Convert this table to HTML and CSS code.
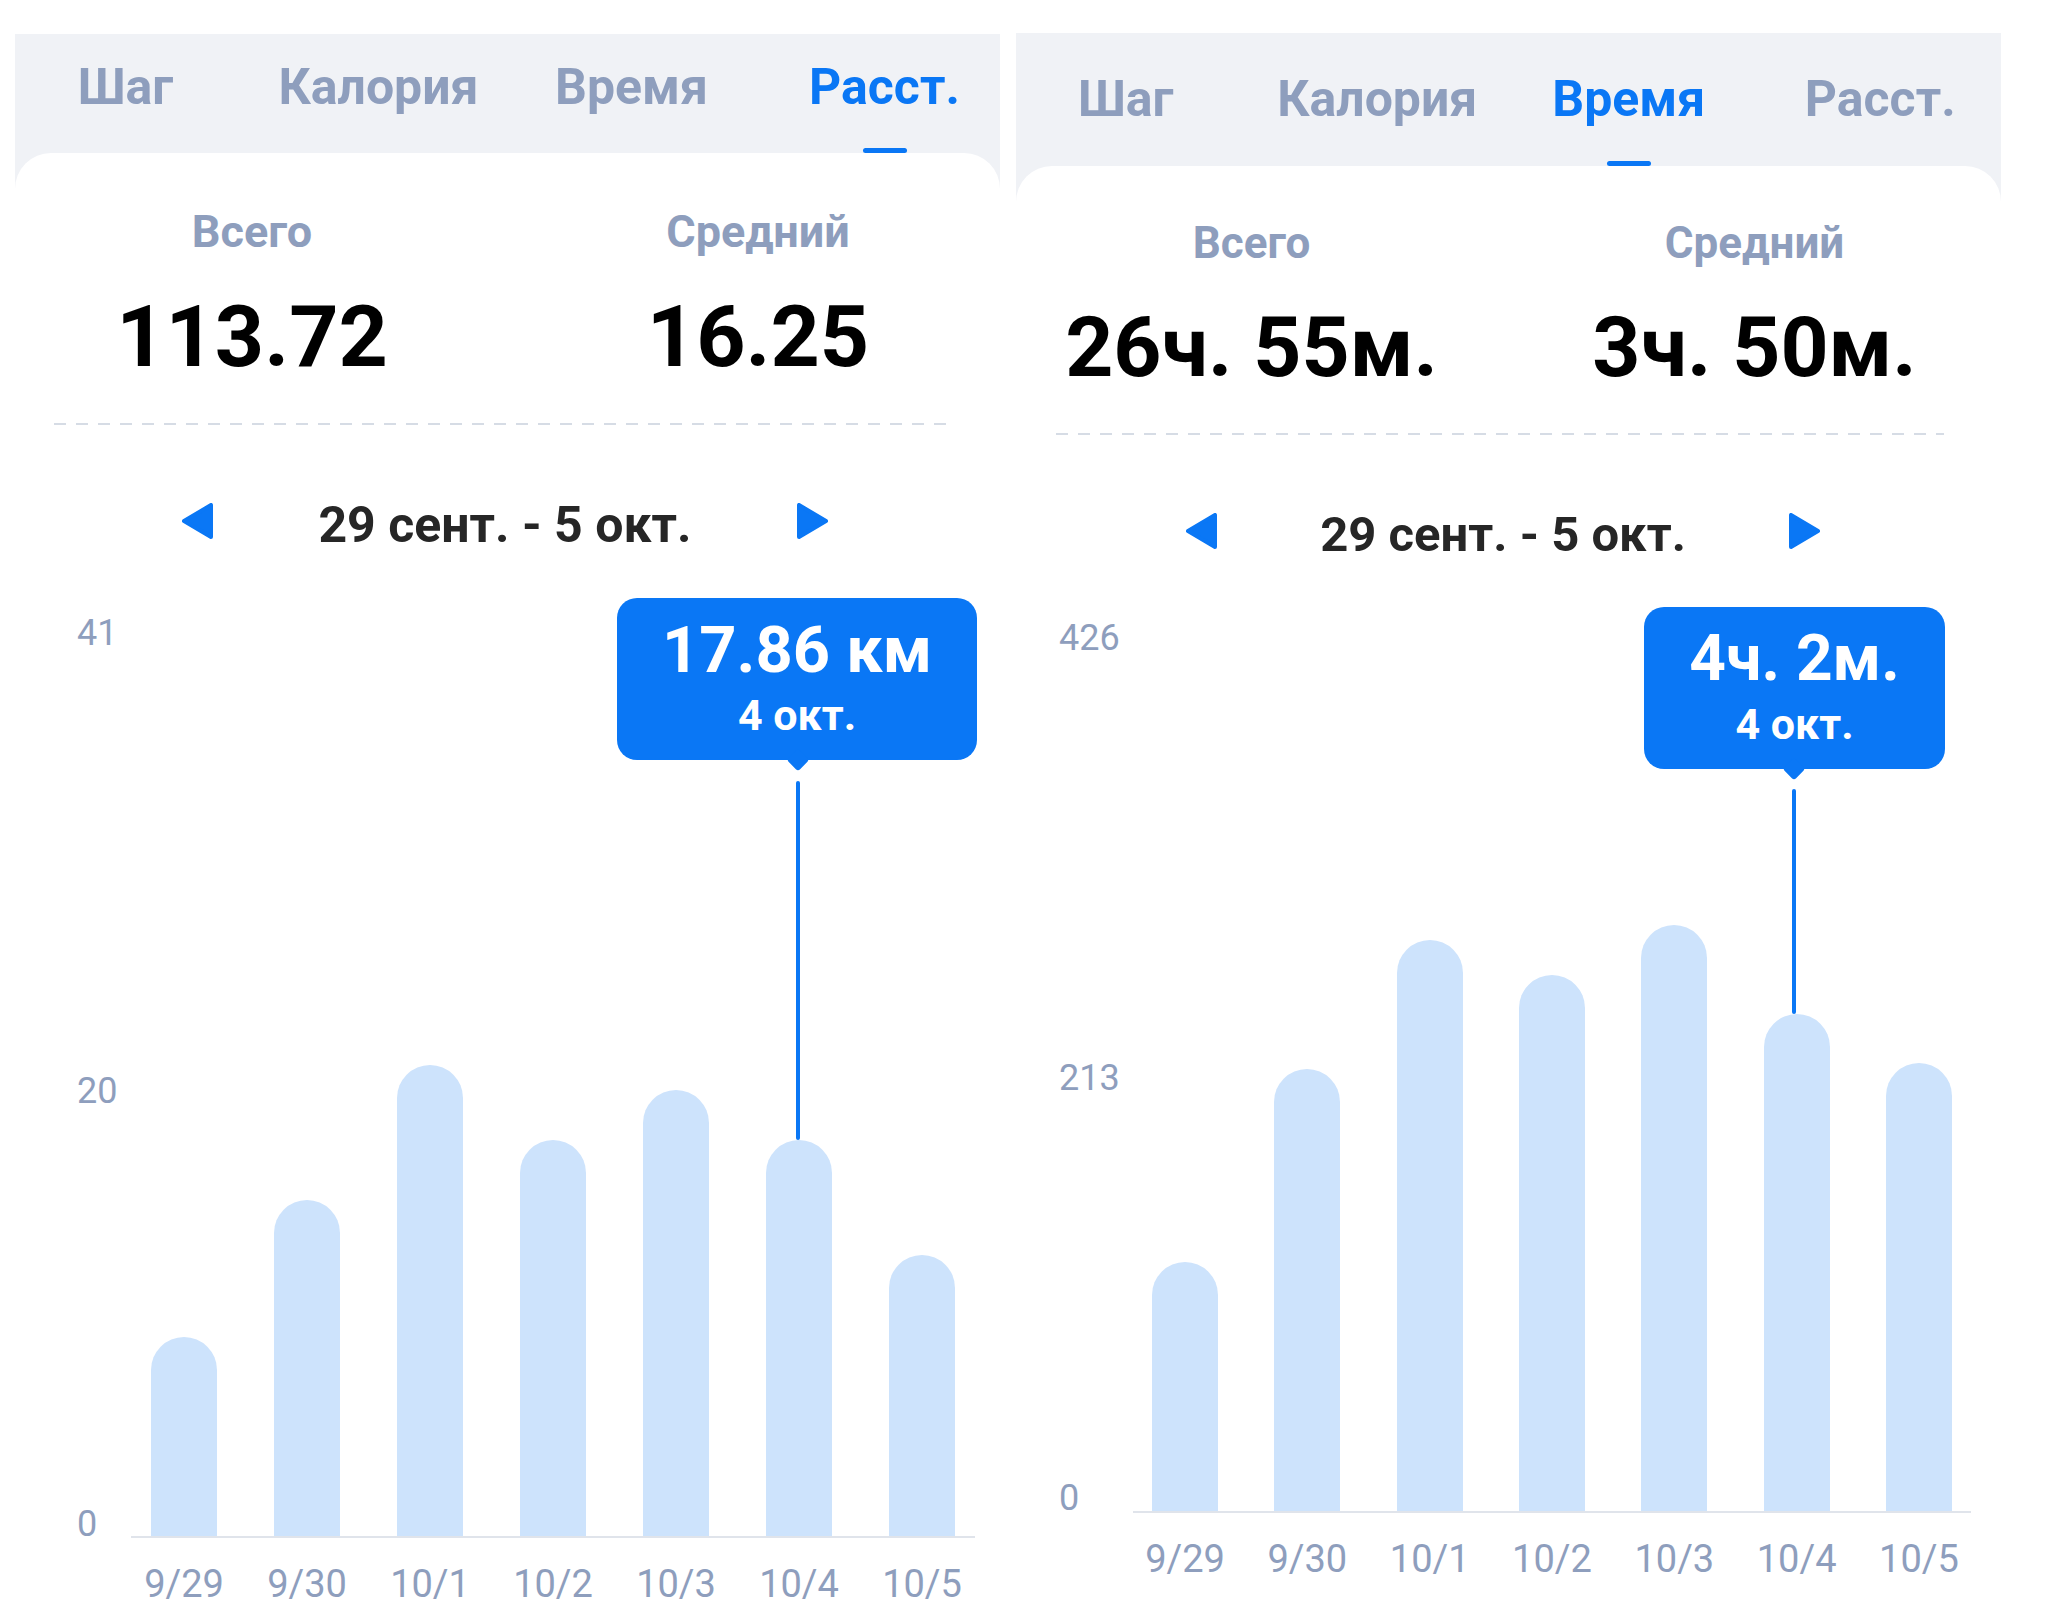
FILE: index.html
```html
<!DOCTYPE html>
<html lang="ru">
<head>
<meta charset="utf-8">
<title>Статистика</title>
<link rel="stylesheet" href="styles.css">
</head>
<body>
<div class="page">

  <section class="panel">
    <div class="tabs">
      <div class="tab"><span class="tab-label">Шаг</span></div>
      <div class="tab"><span class="tab-label">Калория</span></div>
      <div class="tab"><span class="tab-label">Время</span></div>
      <div class="tab tab--active"><span class="tab-label">Расст.</span><span class="tab-underline"></span></div>
    </div>
    <div class="card">
      <div class="card-body">
        <div class="stats">
          <div class="stat"><div class="stat-label">Всего</div><div class="stat-value">113.72</div></div>
          <div class="stat"><div class="stat-label">Средний</div><div class="stat-value">16.25</div></div>
        </div>
        <div class="divider"></div>
        <div class="nav">
          <svg class="arrow" viewBox="0 0 31 36" width="31" height="36"><polygon points="29,2 29,34 2,18"/></svg>
          <span class="nav-range">29 сент. - 5 окт.</span>
          <svg class="arrow" viewBox="0 0 31 36" width="31" height="36"><polygon points="2,2 2,34 29,18"/></svg>
        </div>
        <div class="chart">
          <div class="yaxis">
            <span class="ytick" style="margin-top:58px">41</span>
            <span class="ytick" style="margin-top:418px">20</span>
            <span class="ytick" style="margin-top:393px">0</span>
          </div>
          <div class="plot">
            <div class="bars">
              <div class="bar" style="height:199px"></div>
              <div class="bar" style="height:336px"></div>
              <div class="bar" style="height:471px"></div>
              <div class="bar" style="height:396px"></div>
              <div class="bar" style="height:446px"></div>
              <div class="bar" style="height:396px"></div>
              <div class="bar" style="height:281px"></div>
            </div>
            <div class="xlabels">
              <span class="xlabel">9/29</span><span class="xlabel">9/30</span><span class="xlabel">10/1</span><span class="xlabel">10/2</span><span class="xlabel">10/3</span><span class="xlabel">10/4</span><span class="xlabel">10/5</span>
            </div>
          </div>
          <div class="tooltip tooltip--a">
            <div class="tooltip-value">17.86 км</div>
            <div class="tooltip-date">4 окт.</div>
          </div>
          <div class="guide guide--a"></div>
        </div>
      </div>
    </div>
  </section>

  <section class="panel panel--b">
    <div class="tabs">
      <div class="tab"><span class="tab-label">Шаг</span></div>
      <div class="tab"><span class="tab-label">Калория</span></div>
      <div class="tab tab--active"><span class="tab-label">Время</span><span class="tab-underline"></span></div>
      <div class="tab"><span class="tab-label">Расст.</span></div>
    </div>
    <div class="card">
      <div class="card-body">
        <div class="stats">
          <div class="stat"><div class="stat-label">Всего</div><div class="stat-value">26ч. 55м.</div></div>
          <div class="stat"><div class="stat-label">Средний</div><div class="stat-value">3ч. 50м.</div></div>
        </div>
        <div class="divider"></div>
        <div class="nav">
          <svg class="arrow" viewBox="0 0 31 36" width="31" height="36"><polygon points="29,2 29,34 2,18"/></svg>
          <span class="nav-range">29 сент. - 5 окт.</span>
          <svg class="arrow" viewBox="0 0 31 36" width="31" height="36"><polygon points="2,2 2,34 29,18"/></svg>
        </div>
        <div class="chart">
          <div class="yaxis">
            <span class="ytick" style="margin-top:53px">426</span>
            <span class="ytick" style="margin-top:400px">213</span>
            <span class="ytick" style="margin-top:380px">0</span>
          </div>
          <div class="plot">
            <div class="bars">
              <div class="bar" style="height:249px"></div>
              <div class="bar" style="height:442px"></div>
              <div class="bar" style="height:571px"></div>
              <div class="bar" style="height:536px"></div>
              <div class="bar" style="height:586px"></div>
              <div class="bar" style="height:497px"></div>
              <div class="bar" style="height:448px"></div>
            </div>
            <div class="xlabels">
              <span class="xlabel">9/29</span><span class="xlabel">9/30</span><span class="xlabel">10/1</span><span class="xlabel">10/2</span><span class="xlabel">10/3</span><span class="xlabel">10/4</span><span class="xlabel">10/5</span>
            </div>
          </div>
          <div class="tooltip tooltip--b">
            <div class="tooltip-value">4ч. 2м.</div>
            <div class="tooltip-date">4 окт.</div>
          </div>
          <div class="guide guide--b"></div>
        </div>
      </div>
    </div>
  </section>

</div>
</body>
</html>
```

FILE: styles.css
```css
* { box-sizing: border-box; }

html, body {
  margin: 0;
  padding: 0;
  background: #ffffff;
}

body {
  font-family: Roboto, "Noto Sans", "Liberation Sans", sans-serif;
  width: 2048px;
  height: 1621px;
  overflow: hidden;
}

.page {
  display: flex;
  align-items: flex-start;
  gap: 16px;
  padding: 34px 0 0 15px;
}

.panel {
  width: 985px;
  height: 1587px;
  background: #f0f2f6;
  overflow: hidden;
  display: flex;
  flex-direction: column;
}

.panel--b {
  margin-top: -1px;
  height: 1588px;
}

/* Tabs */
.tabs {
  width: 1012px;
  margin-left: -16px;
  height: 119px;
  display: grid;
  grid-template-columns: repeat(4, 1fr);
}

.panel--b .tabs {
  width: 1006px;
  height: 133px;
}

.tab {
  display: flex;
  flex-direction: column;
  align-items: center;
  padding-top: 23px;
}

.panel--b .tab { padding-top: 36px; }

.tab-label {
  font-size: 50px;
  line-height: 60px;
  font-weight: 700;
  color: #8e9ebd;
  white-space: nowrap;
}

.tab--active .tab-label { color: #0a77f5; }

.tab-underline {
  margin-top: auto;
  width: 44px;
  height: 5px;
  border-radius: 3px;
  background: #0a77f5;
}

/* Card */
.card {
  flex: 1;
  background: #ffffff;
  border-radius: 36px 36px 0 0;
}

.card-body {
  width: 1012px;
  margin-left: -16px;
}

.panel--b .card-body { width: 1006px; }

.stats {
  display: grid;
  grid-template-columns: 1fr 1fr;
  padding-top: 52px;
}

.panel--b .stats { padding-top: 50px; }

.stat {
  display: flex;
  flex-direction: column;
  align-items: center;
}

.stat-label {
  font-size: 45px;
  line-height: 54px;
  font-weight: 700;
  color: #8e9ebd;
}

.panel--b .stat-label { font-size: 44px; }

.stat-value {
  margin-top: 28px;
  font-size: 86px;
  line-height: 100px;
  font-weight: 700;
  color: #000000;
  white-space: nowrap;
}

.panel--b .stat-value { font-size: 84px; }

.divider {
  margin: 36px 62px 0 55px;
  height: 2px;
  background: repeating-linear-gradient(90deg, #d6dce5 0 12px, transparent 12px 22px);
}

.panel--b .divider { margin: 35px 62px 0 56px; }

/* Date nav */
.nav {
  margin-top: 70px;
  height: 60px;
  display: flex;
  align-items: center;
  justify-content: center;
  gap: 105px;
}

.panel--b .nav { gap: 103px; }

.arrow {
  display: block;
  margin-bottom: 8px;
}

.arrow polygon {
  fill: #0a77f5;
  stroke: #0a77f5;
  stroke-width: 4;
  stroke-linejoin: round;
}

.nav-range {
  font-size: 50px;
  line-height: 60px;
  font-weight: 700;
  color: #262626;
  white-space: nowrap;
}

.panel--b .nav-range { font-size: 49px; }

/* Chart */
.chart {
  position: relative;
  display: flex;
  padding-left: 78px;
}

.panel--b .chart { padding-left: 59px; }

.yaxis {
  width: 54px;
  display: flex;
  flex-direction: column;
}

.panel--b .yaxis { width: 74px; }

.ytick {
  font-size: 36px;
  line-height: 40px;
  color: #8e9ebd;
}

.plot {
  width: 844px;
  display: flex;
  flex-direction: column;
}

.panel--b .plot { width: 838px; }

.bars {
  height: 983px;
  display: flex;
  justify-content: space-between;
  align-items: flex-end;
  padding: 0 20px;
  border-bottom: 2px solid #e0e4eb;
}

.panel--b .bars {
  height: 948px;
  padding: 0 19px;
}

.bar {
  width: 66px;
  background: #cde3fc;
  border-radius: 33px 33px 0 0;
}

.xlabels {
  margin-top: 24px;
  display: flex;
  justify-content: space-between;
  padding: 0 20px;
}

.panel--b .xlabels { padding: 0 19px; }

.xlabel {
  width: 66px;
  display: flex;
  justify-content: center;
  font-size: 38px;
  line-height: 44px;
  color: #8e9ebd;
  white-space: nowrap;
}

/* Tooltip */
.tooltip {
  position: absolute;
  height: 162px;
  border-radius: 20px;
  background: #0a77f5;
  color: #ffffff;
  display: flex;
  flex-direction: column;
  align-items: center;
  padding-top: 17px;
  font-weight: 700;
}

.tooltip::after {
  content: "";
  position: absolute;
  bottom: -8px;
  width: 16px;
  height: 16px;
  margin-left: -8px;
  background: #0a77f5;
  border-radius: 3px;
  transform: rotate(45deg);
}

.tooltip--a { left: 618px; top: 43px; width: 360px; }
.tooltip--a::after { left: 181px; }
.tooltip--b { left: 644px; top: 42px; width: 301px; }
.tooltip--b::after { left: 150px; }

.tooltip-value {
  font-size: 65px;
  line-height: 70px;
  white-space: nowrap;
}

.tooltip--b .tooltip-value { font-size: 64px; }

.tooltip-date {
  margin-top: 5px;
  font-size: 43px;
  line-height: 50px;
  white-space: nowrap;
}

.guide {
  position: absolute;
  width: 4px;
  border-radius: 2px;
  background: #0a77f5;
}

.guide--a { left: 797px; top: 226px; height: 359px; }
.guide--b { left: 792px; top: 224px; height: 225px; }
```
